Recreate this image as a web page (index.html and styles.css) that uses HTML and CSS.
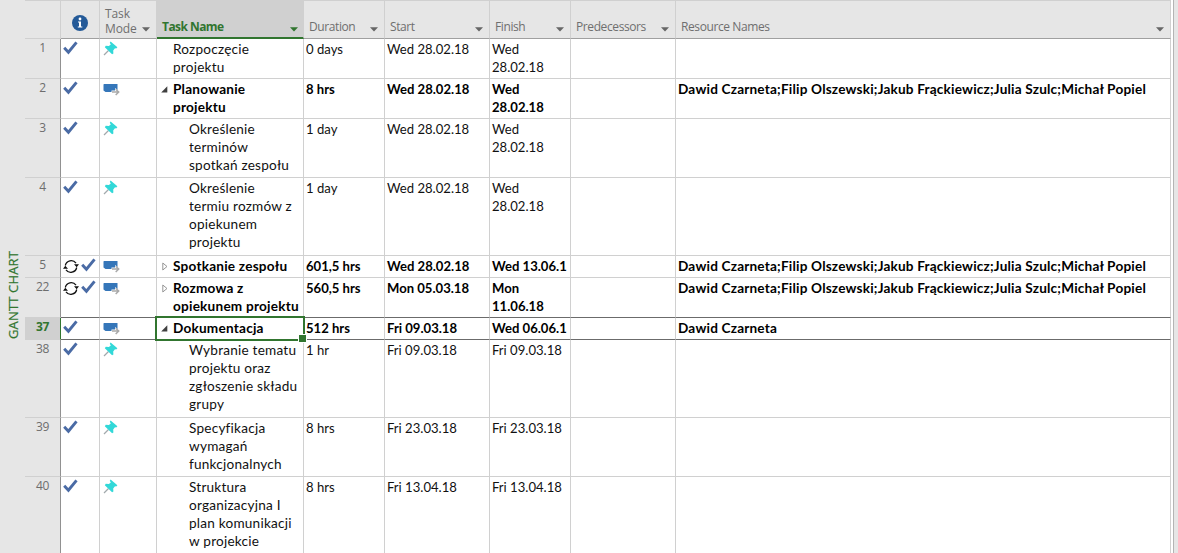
FILE: index.html
```html
<!DOCTYPE html>
<html lang="pl">
<head>
<meta charset="utf-8">
<title>Gantt Chart</title>
<link rel="stylesheet" href="styles.css">
</head>
<body>
<svg class="defs" width="0" height="0">
  <symbol id="check" viewBox="0 0 15 14"><path d="M1.200 6.800 5.400 11.200 13.500 1.400" fill="none" stroke="#4a6ba5" stroke-width="2.900"/></symbol>
  <symbol id="pin" viewBox="0 0 15 15"><path d="M1 14 5.500 9.500" stroke="#a2a9ac" stroke-width="1.300"/><path d="M7.600.6 14.400 6.200 13.200 7.600 12 7.200 10.200 9.400 10.400 12.600 9.100 13.200 1.800 6.200 2.800 4.800 5.900 5.100 7.800 3.400 6.800 1.800Z" fill="#32d8d8"/></symbol>
  <symbol id="auto" viewBox="0 0 17 12"><path d="M1 0h13.500v7H9.500v1H2.500L.5 6.500V.5Z" fill="#3576b9"/><path d="M8.500 6.500h3.500V4L17 8l-5 4V9.500H8.500Z" fill="#fff"/><path d="M9 8h6M12.700 5.200 15.700 8l-3 3" fill="none" stroke="#a9a9a9" stroke-width="1.500"/></symbol>
  <symbol id="cycle" viewBox="0 0 16 15"><path d="M2.300 6.500A6 6 0 0 1 13 4.200M13.700 8.500A6 6 0 0 1 3 10.800" fill="none" stroke="#111" stroke-width="1.300"/><path d="M11 5.300h5L13.700 8.300ZM5 9.700H0L2.300 6.700Z" fill="#111"/></symbol>
  <symbol id="down" viewBox="0 0 8 5"><path d="M0 .3h8L4 4.600Z" fill="currentColor"/></symbol>
  <symbol id="open" viewBox="0 0 7 7"><path d="M.2 6.500 6.300 .2v6.300Z" fill="#404040"/></symbol>
  <symbol id="closed" viewBox="0 0 6 9"><path d="M.8 1 5 4.500.8 8Z" fill="#fff" stroke="#8b8b8b" stroke-width=".9"/></symbol>
</svg>
<div class="view">
  <div class="side"><span class="side-label">GANTT CHART</span></div>
  <div class="table">
    <div class="row head">
      <div class="num"></div>
      <div class="info"><svg class="info-icon" viewBox="0 0 16 16"><circle cx="8" cy="8" r="8" fill="#245a98"/><path d="M6 6.500h3v5h1.300v1H5.800v-1H7v-4H6Z" fill="#fff"/><circle cx="8" cy="4" r="1.400" fill="#fff"/></svg></div>
      <div class="mode"><span>Task<br>Mode</span><svg class="down"><use href="#down"/></svg></div>
      <div class="name"><span>Task Name</span><svg class="down"><use href="#down"/></svg></div>
      <div class="dur"><span>Duration</span><svg class="down"><use href="#down"/></svg></div>
      <div><span>Start</span><svg class="down"><use href="#down"/></svg></div>
      <div><span>Finish</span><svg class="down"><use href="#down"/></svg></div>
      <div><span>Predecessors</span><svg class="down"><use href="#down"/></svg></div>
      <div><span>Resource Names</span><svg class="down"><use href="#down"/></svg></div>
    </div>
    <div class="row two"><div class="num">1</div><div class="info"><svg class="check"><use href="#check"/></svg></div><div class="mode"><svg class="pin"><use href="#pin"/></svg></div><div class="name">Rozpoczęcie<br>projektu</div><div>0 days</div><div>Wed 28.02.18</div><div>Wed<br>28.02.18</div><div></div><div></div></div>
    <div class="row two bold"><div class="num">2</div><div class="info"><svg class="check"><use href="#check"/></svg></div><div class="mode"><svg class="auto"><use href="#auto"/></svg></div><div class="name"><svg class="open"><use href="#open"/></svg>Planowanie<br>projektu</div><div>8 hrs</div><div>Wed 28.02.18</div><div>Wed<br>28.02.18</div><div></div><div class="people">Dawid Czarneta;Filip Olszewski;Jakub Frąckiewicz;Julia Szulc;Michał Popiel</div></div>
    <div class="row three sub"><div class="num">3</div><div class="info"><svg class="check"><use href="#check"/></svg></div><div class="mode"><svg class="pin"><use href="#pin"/></svg></div><div class="name">Określenie<br>terminów<br>spotkań zespołu</div><div>1 day</div><div>Wed 28.02.18</div><div>Wed<br>28.02.18</div><div></div><div></div></div>
    <div class="row four sub"><div class="num">4</div><div class="info"><svg class="check"><use href="#check"/></svg></div><div class="mode"><svg class="pin"><use href="#pin"/></svg></div><div class="name">Określenie<br>termiu rozmów z<br>opiekunem<br>projektu</div><div>1 day</div><div>Wed 28.02.18</div><div>Wed<br>28.02.18</div><div></div><div></div></div>
    <div class="row one bold"><div class="num">5</div><div class="info"><svg class="cycle"><use href="#cycle"/></svg><svg class="check"><use href="#check"/></svg></div><div class="mode"><svg class="auto"><use href="#auto"/></svg></div><div class="name"><svg class="closed"><use href="#closed"/></svg>Spotkanie zespołu</div><div>601,5 hrs</div><div>Wed 28.02.18</div><div>Wed 13.06.1</div><div></div><div class="people">Dawid Czarneta;Filip Olszewski;Jakub Frąckiewicz;Julia Szulc;Michał Popiel</div></div>
    <div class="row two bold before"><div class="num">22</div><div class="info"><svg class="cycle"><use href="#cycle"/></svg><svg class="check"><use href="#check"/></svg></div><div class="mode"><svg class="auto"><use href="#auto"/></svg></div><div class="name"><svg class="closed"><use href="#closed"/></svg>Rozmowa z<br>opiekunem projektu</div><div>560,5 hrs</div><div>Mon 05.03.18</div><div>Mon<br>11.06.18</div><div></div><div class="people">Dawid Czarneta;Filip Olszewski;Jakub Frąckiewicz;Julia Szulc;Michał Popiel</div></div>
    <div class="row one bold selected"><div class="num">37</div><div class="info"><svg class="check"><use href="#check"/></svg></div><div class="mode"><svg class="auto"><use href="#auto"/></svg></div><div class="name"><svg class="open"><use href="#open"/></svg>Dokumentacja<i class="frame"></i></div><div>512 hrs</div><div>Fri 09.03.18</div><div>Wed 06.06.1</div><div></div><div class="people">Dawid Czarneta</div></div>
    <div class="row four sub"><div class="num">38</div><div class="info"><svg class="check"><use href="#check"/></svg></div><div class="mode"><svg class="pin"><use href="#pin"/></svg></div><div class="name">Wybranie tematu<br>projektu oraz<br>zgłoszenie składu<br>grupy</div><div>1 hr</div><div>Fri 09.03.18</div><div>Fri 09.03.18</div><div></div><div></div></div>
    <div class="row three sub"><div class="num">39</div><div class="info"><svg class="check"><use href="#check"/></svg></div><div class="mode"><svg class="pin"><use href="#pin"/></svg></div><div class="name">Specyfikacja<br>wymagań<br>funkcjonalnych</div><div>8 hrs</div><div>Fri 23.03.18</div><div>Fri 23.03.18</div><div></div><div></div></div>
    <div class="row four sub"><div class="num">40</div><div class="info"><svg class="check"><use href="#check"/></svg></div><div class="mode"><svg class="pin"><use href="#pin"/></svg></div><div class="name">Struktura<br>organizacyjna I<br>plan komunikacji<br>w projekcie</div><div>8 hrs</div><div>Fri 13.04.18</div><div>Fri 13.04.18</div><div></div><div></div></div>
  </div>
  <div class="splitter"></div>
</div>
</body>
</html>
```
FILE: styles.css
```css
* { box-sizing: border-box; }
body { margin: 0; background: #fff; }
.defs { display: none; }
.view {
  display: grid;
  grid-template-columns: 25px 1146px 7px;
  height: 553px;
  overflow: hidden;
  font: 13.1px/18px Lato, sans-serif;
  color: #111;
}
.side { background: #e6e6e6; display: flex; align-items: flex-end; justify-content: center; padding-bottom: 216px; }
.side-label {
  writing-mode: vertical-rl;
  transform: rotate(180deg);
  font: 13px/16px "Open Sans", sans-serif;
  letter-spacing: .15px;
  color: #31752f;
  -webkit-text-stroke: .2px #31752f;
  white-space: nowrap;
}
.row { display: grid; grid-template-columns: 36px 39px 57px 147px 81px 105px 81px 105px 495px; }
.row > div { border-right: 1px solid #d0d0d0; border-bottom: 1px solid #d0d0d0; padding: 1px 0 0 2px; white-space: nowrap; }
.row > .num {
  background: #e6e6e6;
  border-right-color: #919191;
  font: 12px/18px "Open Sans", sans-serif;
  letter-spacing: -.4px;
  color: #6d6d6d;
  text-align: center;
  padding: 0;
}
.one { height: 22px; }
.two { height: 40px; }
.three { height: 59px; }
.four { height: 78px; }
.bold { font-weight: 700; color: #000; }
.row > .name { position: relative; padding-left: 16px; font-size: 13.6px; letter-spacing: .22px; }
.row > .people { font-size: 13.6px; letter-spacing: .19px; }
.row.sub > .name { padding-left: 32px; }
.row > .info, .row > .mode { display: flex; align-items: flex-start; gap: 3px; padding: 2px 0 0 2px; }
.row > .info { gap: 2px; }
.row > .mode { padding-left: 3px; }
.check { width: 15px; height: 14px; }
.pin { width: 15px; height: 15px; }
.auto { width: 17px; height: 12px; margin-top: 3px; }
.cycle { width: 16px; height: 15px; margin-top: 1px; }
.open, .closed { position: absolute; left: 4px; top: 7px; width: 7px; height: 7px; }
.closed { left: 5px; top: 6px; width: 6px; height: 9px; }

.head { height: 39px; background: #e6e6e6; font: 12px/15px "Open Sans", sans-serif; letter-spacing: -.4px; color: #6f6f6f; }
.row.head > div {
  display: flex;
  align-items: flex-end;
  justify-content: space-between;
  border-top: 1px solid #d0d0d0;
  border-bottom-color: #a0a0a0;
  padding: 0 6px 4px 5px;
}
.row.head > .mode { padding: 0 6px 2px 5px; letter-spacing: -.1px; }
.row.head > .name { padding: 0 5px 3px 5px; background: #d0d0d0; color: #31752f; font-size: 12px; font-weight: 700; letter-spacing: -.55px; border-bottom: 2px solid #31752f; }
.row.head > .num { border-right-color: #d0d0d0; border-bottom-color: #d0d0d0; }
.row.head > .info { padding: 0 11px 7px; justify-content: center; }
.info-icon { width: 16px; height: 16px; flex: none; }
.down { width: 8px; height: 5px; margin-bottom: 2px; color: #666; flex: none; }
.mode .down { margin-bottom: 4px; }
.name .down { color: #31752f; }

.before > div, .selected > div { border-bottom-color: #6b6b6b; }
.before > .num { border-bottom-color: #d0d0d0; }
.row.selected > .num { background: #d0d0d0; color: #31752f; font-weight: 700; border-right: 1px solid #31752f; border-bottom-color: #d0d0d0; }
.frame { position: absolute; left: -2px; top: -2px; width: 150px; height: 25px; border: 2px solid #31752f; z-index: 1; }
.frame::after { content: ""; position: absolute; right: -4px; bottom: -4px; width: 7px; height: 7px; background: #31752f; border: 1px solid #fff; }
.splitter { border-left: 2px solid #fff; background: #e6e6e6; box-shadow: inset 1px 0 #b4b4b4; }
```
